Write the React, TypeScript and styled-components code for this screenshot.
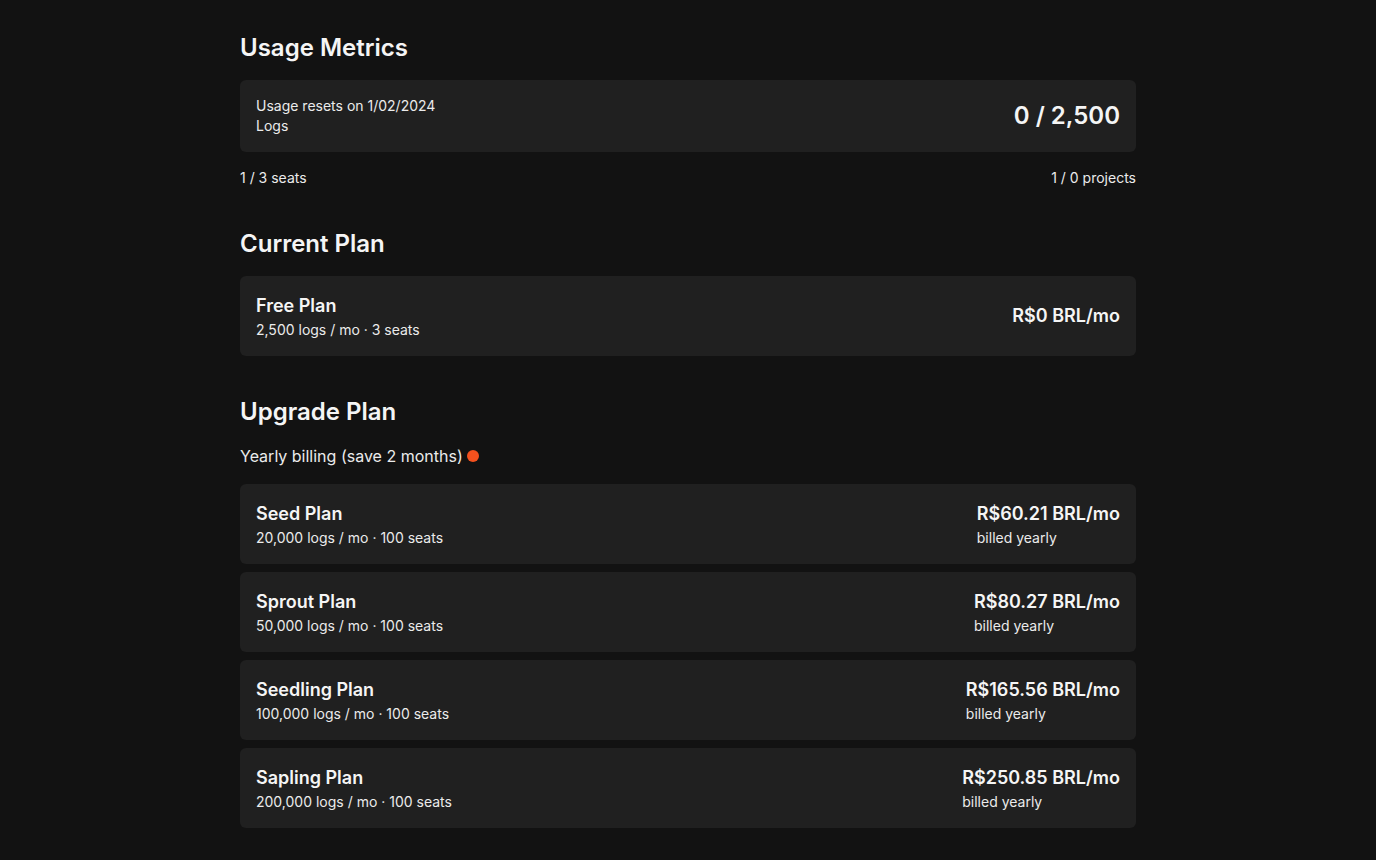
import React from "react";
import styled, { createGlobalStyle } from "styled-components";

const GlobalStyle = createGlobalStyle`
  html, body { margin: 0; padding: 0; background: #121212; }
  body {
    font-family: Inter, "Noto Sans", sans-serif;
    color: #e8e8e8;
    -webkit-font-smoothing: antialiased;
  }
`;

const Page = styled.main`
  max-width: 896px;
  margin: 0 auto;
  padding: 32px 0 32px;
  display: flex;
  flex-direction: column;
`;

const Section = styled.section<{ $gapTop?: boolean }>`
  display: flex;
  flex-direction: column;
  margin-top: ${(p) => (p.$gapTop ? "40px" : "0")};
`;

const Heading = styled.h2`
  margin: 0 0 16px;
  font-size: 24px;
  line-height: 32px;
  font-weight: 600;
  color: #f5f5f5;
`;

const Card = styled.div`
  background: #202020;
  border-radius: 6px;
  padding: 16px;
  display: flex;
  align-items: center;
  justify-content: space-between;
`;

const CardList = styled.div`
  display: flex;
  flex-direction: column;
  gap: 8px;
`;

const SmallText = styled.div`
  font-size: 14px;
  line-height: 20px;
  color: #ebebeb;
`;

const BigNumber = styled.div`
  font-size: 24px;
  line-height: 32px;
  font-weight: 600;
  color: #f5f5f5;
`;

const FooterRow = styled.div`
  margin-top: 16px;
  display: flex;
  justify-content: space-between;
  font-size: 14px;
  line-height: 20px;
  color: #ebebeb;
`;

const PlanTitle = styled.div`
  font-size: 18px;
  line-height: 28px;
  font-weight: 600;
  color: #f5f5f5;
`;

const Price = styled.div`
  font-size: 18px;
  line-height: 28px;
  font-weight: 600;
  color: #f5f5f5;
`;

const PriceBlock = styled.div`
  display: flex;
  flex-direction: column;
  align-items: flex-start;
`;

const BillingRow = styled.div`
  display: flex;
  align-items: center;
  gap: 4px;
  font-size: 16px;
  line-height: 24px;
  color: #ebebeb;
  margin-bottom: 16px;
`;

const Dot = styled.span`
  width: 12px;
  height: 12px;
  border-radius: 50%;
  background: #f4511e;
  display: inline-block;
`;

const plans = [
  { name: "Seed Plan", logs: "20,000", price: "R$60.21" },
  { name: "Sprout Plan", logs: "50,000", price: "R$80.27" },
  { name: "Seedling Plan", logs: "100,000", price: "R$165.56" },
  { name: "Sapling Plan", logs: "200,000", price: "R$250.85" },
];

export default function App() {
  return (
    <>
      <GlobalStyle />
      <Page>
        <Section>
          <Heading>Usage Metrics</Heading>
          <Card>
            <div>
              <SmallText>Usage resets on 1/02/2024</SmallText>
              <SmallText>Logs</SmallText>
            </div>
            <BigNumber>0 / 2,500</BigNumber>
          </Card>
          <FooterRow>
            <span>1 / 3 seats</span>
            <span>1 / 0 projects</span>
          </FooterRow>
        </Section>

        <Section $gapTop>
          <Heading>Current Plan</Heading>
          <Card>
            <div>
              <PlanTitle>Free Plan</PlanTitle>
              <SmallText>2,500 logs / mo · 3 seats</SmallText>
            </div>
            <Price>R$0 BRL/mo</Price>
          </Card>
        </Section>

        <Section $gapTop>
          <Heading>Upgrade Plan</Heading>
          <BillingRow>
            <span>Yearly billing (save 2 months)</span>
            <Dot />
          </BillingRow>
          <CardList>
            {plans.map((p) => (
              <Card key={p.name}>
                <div>
                  <PlanTitle>{p.name}</PlanTitle>
                  <SmallText>{p.logs} logs / mo · 100 seats</SmallText>
                </div>
                <PriceBlock>
                  <Price>{p.price} BRL/mo</Price>
                  <SmallText>billed yearly</SmallText>
                </PriceBlock>
              </Card>
            ))}
          </CardList>
        </Section>
      </Page>
    </>
  );
}
